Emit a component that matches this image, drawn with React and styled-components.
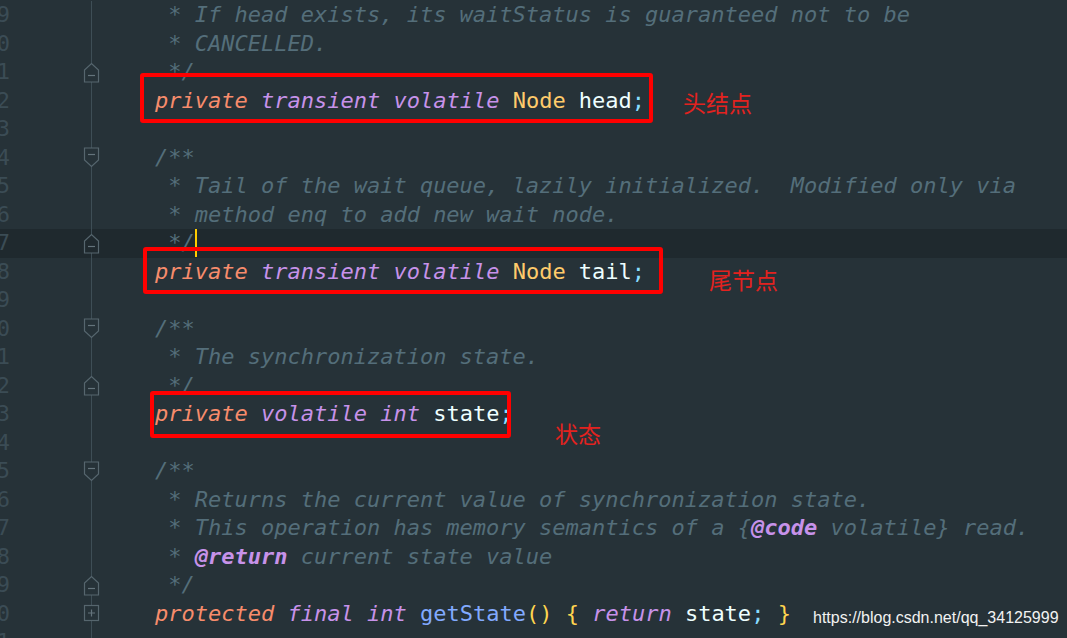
import React from "react";
import styled, { createGlobalStyle } from "styled-components";

const Global = createGlobalStyle`
  html, body { margin: 0; padding: 0; background: #263238; }
  body { width: 1067px; height: 638px; overflow: hidden; }
`;

const LINE_H = 28.5;
const BG = "#263238";
const CUR_BG = "#1f292e";

const Editor = styled.div`
  position: relative;
  width: 1067px;
  height: 638px;
  overflow: hidden;
  background: ${BG};
  display: flex;
  flex-direction: column;
  padding-top: 1px;
  box-sizing: border-box;
  font-family: "DejaVu Sans Mono", "Liberation Mono", monospace;
  font-size: 22px;
`;

const Row = styled.div`
  display: flex;
  height: ${LINE_H}px;
  flex: 0 0 ${LINE_H}px;
  background: ${(p) => (p.$current ? CUR_BG : "transparent")};
`;

const LineNo = styled.div`
  width: 14px;
  margin-left: -4px;
  text-align: right;
  color: #3b4c55;
  line-height: ${LINE_H}px;
  flex: 0 0 14px;
`;

const Spacer = styled.div`
  flex: 0 0 71px;
`;

const FoldCell = styled.div`
  position: relative;
  flex: 0 0 20px;
  display: flex;
  align-items: center;
  justify-content: center;
  &::before {
    content: "";
    position: absolute;
    left: 10px;
    top: 0;
    bottom: 0;
    width: 1px;
    background: #3e4e56;
  }
  svg { position: relative; left: 0.5px; }
`;

const Code = styled.div`
  flex: 1;
  padding-left: 1px;
  white-space: pre;
  line-height: ${LINE_H}px;
  color: #eeffff;
  position: relative;
`;

const colors = {
  c: { color: "#546e7a", italic: true },
  tag: { color: "#c792ea", italic: true, bold: true },
  kw: { color: "#f78c6c", italic: true },
  mod: { color: "#c792ea", italic: true },
  type: { color: "#ffcb6b" },
  id: { color: "#eeffff" },
  p: { color: "#89ddff" },
  fn: { color: "#82aaff" },
  br: { color: "#ffd54f" },
};

const Tok = styled.span`
  color: ${(p) => colors[p.$t].color};
  font-style: ${(p) => (colors[p.$t].italic ? "italic" : "normal")};
  font-weight: ${(p) => (colors[p.$t].bold ? "bold" : "normal")};
`;

const Caret = styled.span`
  display: inline-block;
  width: 2px;
  height: 28px;
  background: #ffcc00;
  vertical-align: top;
`;

const RedBox = styled.div`
  position: absolute;
  box-sizing: border-box;
  border: 4.5px solid #ff0000;
  border-radius: 3px;
  left: ${(p) => p.$x}px;
  top: ${(p) => p.$y}px;
  width: ${(p) => p.$w}px;
  height: ${(p) => p.$h}px;
`;

const Note = styled.div`
  position: absolute;
  left: ${(p) => p.$x}px;
  top: ${(p) => p.$y}px;
  color: #e3221f;
  font-family: "Noto Sans CJK SC", sans-serif;
  font-size: 23px;
  line-height: 1;
  font-weight: 400;
`;

const Watermark = styled.div`
  position: absolute;
  left: 813px;
  top: 609px;
  color: #f2f2f2;
  font-family: "Liberation Sans", Arial, sans-serif;
  font-size: 16px;
  line-height: 18px;
`;

const STROKE = "#56666e";
const MINUS = "#64747c";

const FoldEnd = ({ fill }) => (
  <svg width="17" height="21" viewBox="0 0 17 21">
    <path d="M1.5 20 V8 L8.5 1.5 L15.5 8 V20 Z" fill={fill} stroke={STROKE} strokeWidth="1.2" />
    <path d="M5 13.5 H12" stroke={MINUS} strokeWidth="1.2" />
  </svg>
);
const FoldStart = () => (
  <svg width="17" height="21" viewBox="0 0 17 21">
    <path d="M1.5 1 V13 L8.5 19.5 L15.5 13 V1 Z" fill={BG} stroke={STROKE} strokeWidth="1.2" />
    <path d="M5 7.5 H12" stroke={MINUS} strokeWidth="1.2" />
  </svg>
);
const FoldPlus = () => (
  <svg width="17" height="21" viewBox="0 0 17 21">
    <rect x="1.5" y="2.5" width="14" height="15" fill={BG} stroke={STROKE} strokeWidth="1.2" />
    <path d="M5 10 H12 M8.5 6.5 V13.5" stroke={MINUS} strokeWidth="1.2" />
  </svg>
);

const lines = [
  { n: 9, t: [["c", "     * If head exists, its waitStatus is guaranteed not to be"]] },
  { n: 0, t: [["c", "     * CANCELLED."]] },
  { n: 1, f: "end", t: [["c", "     */"]] },
  {
    n: 2,
    t: [["id", "    "], ["kw", "private"], ["id", " "], ["mod", "transient"], ["id", " "], ["mod", "volatile"], ["id", " "], ["type", "Node"], ["id", " head"], ["p", ";"]],
  },
  { n: 3, t: [] },
  { n: 4, f: "start", t: [["c", "    /**"]] },
  { n: 5, t: [["c", "     * Tail of the wait queue, lazily initialized.  Modified only via"]] },
  { n: 6, t: [["c", "     * method enq to add new wait node."]] },
  { n: 7, f: "endcur", cur: true, caret: true, t: [["c", "     */"]] },
  {
    n: 8,
    t: [["id", "    "], ["kw", "private"], ["id", " "], ["mod", "transient"], ["id", " "], ["mod", "volatile"], ["id", " "], ["type", "Node"], ["id", " tail"], ["p", ";"]],
  },
  { n: 9, t: [] },
  { n: 0, f: "start", t: [["c", "    /**"]] },
  { n: 1, t: [["c", "     * The synchronization state."]] },
  { n: 2, f: "end", t: [["c", "     */"]] },
  {
    n: 3,
    t: [["id", "    "], ["kw", "private"], ["id", " "], ["mod", "volatile"], ["id", " "], ["mod", "int"], ["id", " state"], ["p", ";"]],
  },
  { n: 4, t: [] },
  { n: 5, f: "start", t: [["c", "    /**"]] },
  { n: 6, t: [["c", "     * Returns the current value of synchronization state."]] },
  {
    n: 7,
    t: [["c", "     * This operation has memory semantics of a {"], ["tag", "@code"], ["c", " volatile} read."]],
  },
  { n: 8, t: [["c", "     * "], ["tag", "@return"], ["c", " current state value"]] },
  { n: 9, f: "end", t: [["c", "     */"]] },
  {
    n: 0,
    f: "plus",
    t: [
      ["id", "    "], ["kw", "protected"], ["id", " "], ["mod", "final"], ["id", " "], ["mod", "int"], ["id", " "],
      ["fn", "getState"], ["br", "()"], ["id", " "], ["br", "{"], ["id", " "], ["mod", "return"], ["id", " state"], ["p", ";"], ["id", " "], ["br", "}"],
    ],
  },
  { n: 1, t: [] },
];

const foldIcon = (f) => {
  if (f === "end") return <FoldEnd fill={BG} />;
  if (f === "endcur") return <FoldEnd fill={CUR_BG} />;
  if (f === "start") return <FoldStart />;
  if (f === "plus") return <FoldPlus />;
  return null;
};

export default function App() {
  return (
    <>
      <Global />
      <Editor>
        {lines.map((l, i) => (
          <Row key={i} $current={l.cur}>
            <LineNo>{l.n}</LineNo>
            <Spacer />
            <FoldCell>{foldIcon(l.f)}</FoldCell>
            <Code>
              {l.t.map(([t, s], j) => (
                <Tok key={j} $t={t}>{s}</Tok>
              ))}
              {l.caret && <Caret />}
            </Code>
          </Row>
        ))}
        <RedBox $x={140} $y={73} $w={513} $h={50} />
        <RedBox $x={143} $y={247} $w={520} $h={47} />
        <RedBox $x={150} $y={391} $w={361} $h={47} />
        <Note $x={683} $y={91}>头结点</Note>
        <Note $x={709} $y={268}>尾节点</Note>
        <Note $x={555} $y={422}>状态</Note>
        <Watermark>https://blog.csdn.net/qq_34125999</Watermark>
      </Editor>
    </>
  );
}
